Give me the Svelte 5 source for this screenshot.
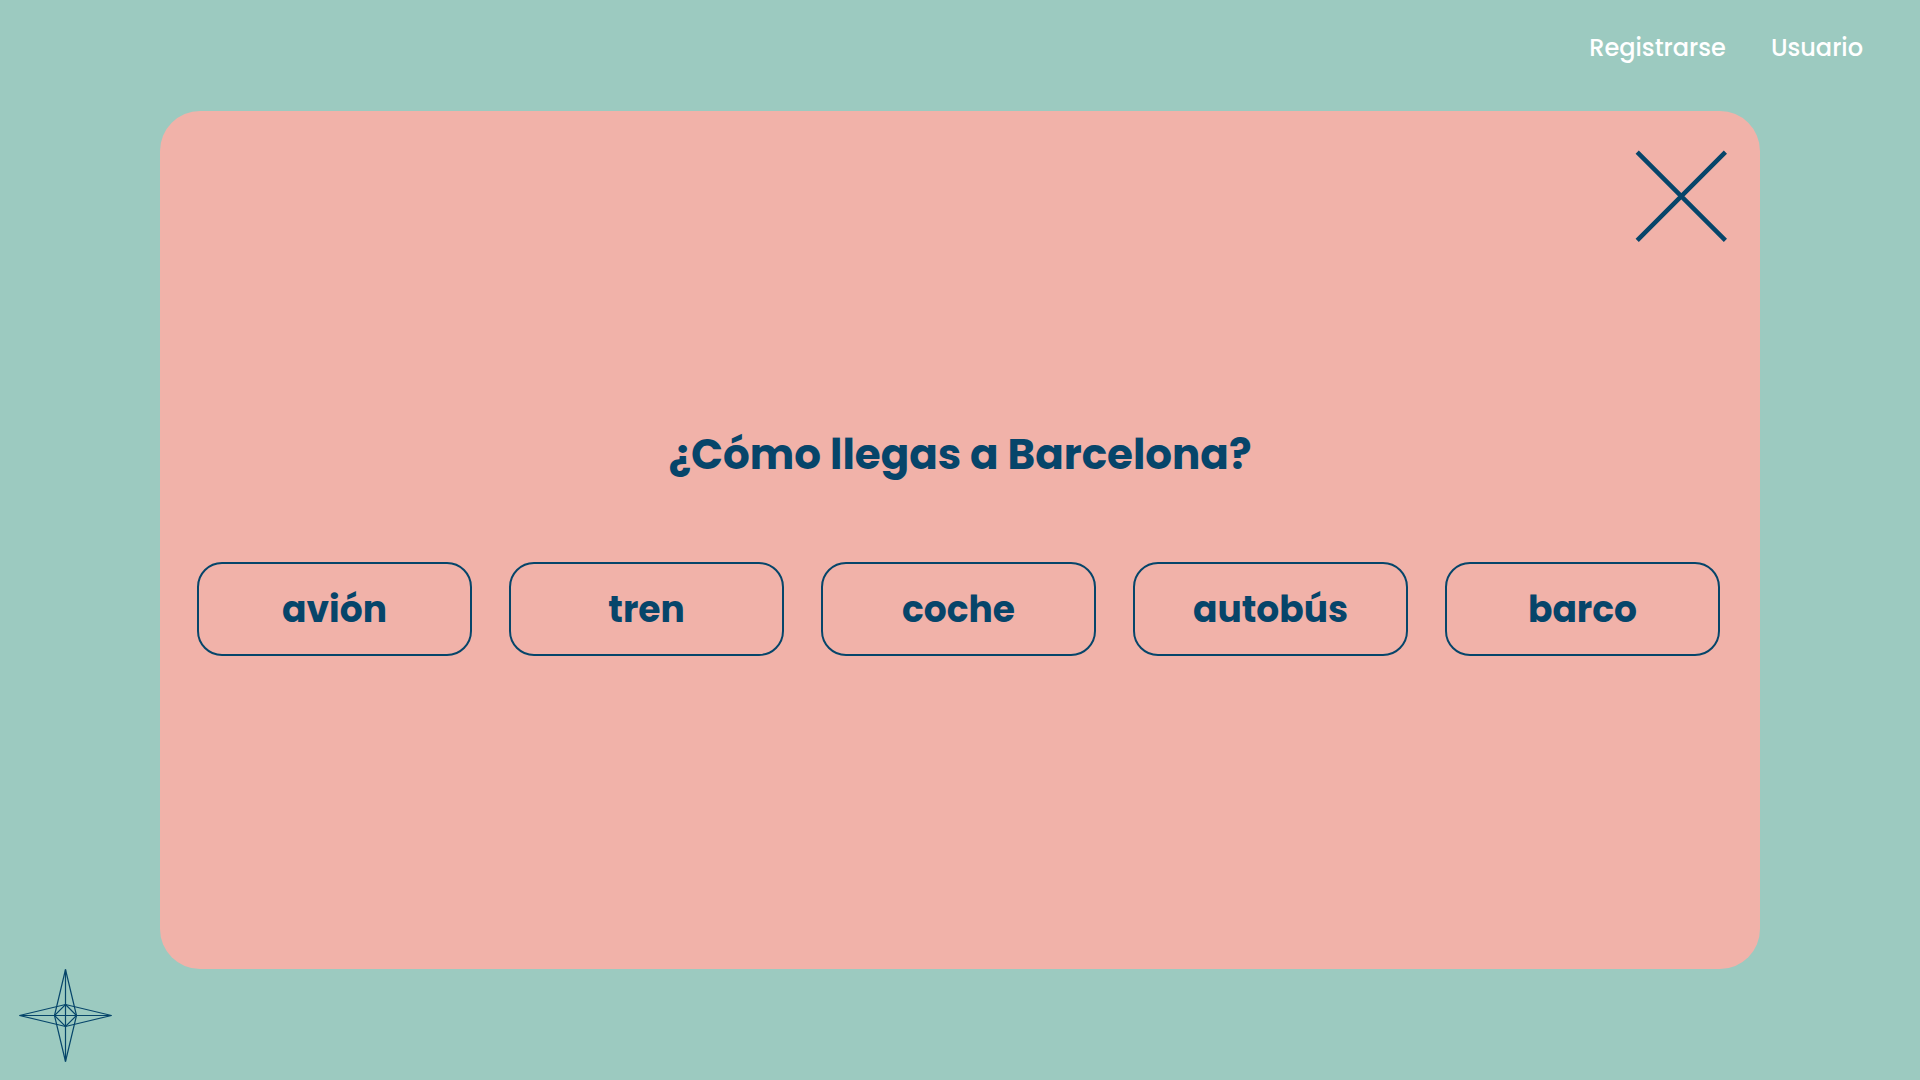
<script>
  const links = ['Registrarse', 'Usuario'];
  const options = ['avión', 'tren', 'coche', 'autobús', 'barco'];
</script>

<div class="page">
  <nav class="nav" aria-label="Cuenta">
    {#each links as link}
      <a href="#{link.toLowerCase()}">{link}</a>
    {/each}
  </nav>

  <main class="card">
    <button class="close" type="button" aria-label="Cerrar">
      <svg viewBox="0 0 92 92" aria-hidden="true">
        <path d="M2.2 2.2 90.4 90.4M90.4 2.2 2.2 90.4" />
      </svg>
    </button>
    <h1>¿Cómo llegas a Barcelona?</h1>
    <div class="options">
      {#each options as option}
        <button class="option" type="button">{option}</button>
      {/each}
    </div>
  </main>

  <footer>
    <a class="compass" href="#inicio" aria-label="Inicio">
      <svg viewBox="-46.5 -46.5 93 93" aria-hidden="true">
        <path d="M0-46V46M-46 0H46" />
        <path d="M0-46 11 0 0 46-11 0Z" />
        <path d="M-46 0 0-11 46 0 0 11Z" />
        <path d="M0-11 11 0 0 11-11 0Z" />
      </svg>
    </a>
  </footer>
</div>

<style>
  :global(body) {
    margin: 0;
    background: #9ccac0;
  }

  .page {
    box-sizing: border-box;
    min-height: 100vh;
    display: flex;
    flex-direction: column;
    color: #06456a;
    font-family: Poppins, Inter, sans-serif;
  }

  .nav {
    display: flex;
    justify-content: flex-end;
    align-items: center;
    gap: 45px;
    padding: 30px 57px 45px;
  }

  .nav a {
    color: #fff;
    font-size: 24px;
    font-weight: 500;
    line-height: 36px;
    text-decoration: none;
  }

  .card {
    box-sizing: border-box;
    flex: 1;
    display: flex;
    flex-direction: column;
    margin: 0 160px;
    padding: 39px 0;
    border-radius: 40px;
    background: #f1b2a9;
  }

  .close {
    align-self: flex-end;
    margin-right: 33px;
    padding: 0;
    border: 0;
    background: none;
    cursor: pointer;
  }

  .close svg {
    display: block;
    width: 92px;
    height: 92px;
    overflow: visible;
    fill: none;
    stroke: #06456a;
    stroke-width: 4.5;
  }

  h1 {
    margin: 180px 0 74px;
    font-size: 42px;
    font-weight: 700;
    line-height: 66px;
    text-align: center;
  }

  .options {
    display: grid;
    grid-template-columns: repeat(5, 1fr);
    gap: 37px;
    padding: 0 40px 0 37px;
  }

  .option {
    height: 94px;
    padding: 0;
    border: 2px solid #06456a;
    border-radius: 25px;
    background: none;
    color: inherit;
    font-family: inherit;
    font-size: 36px;
    font-weight: 700;
    cursor: pointer;
  }

  footer {
    padding: 0 19px 18px;
  }

  .compass {
    display: block;
    width: 93px;
  }

  .compass svg {
    display: block;
    width: 93px;
    height: 93px;
    overflow: visible;
    fill: none;
    stroke: #06456a;
    stroke-width: 1.2;
  }
</style>
